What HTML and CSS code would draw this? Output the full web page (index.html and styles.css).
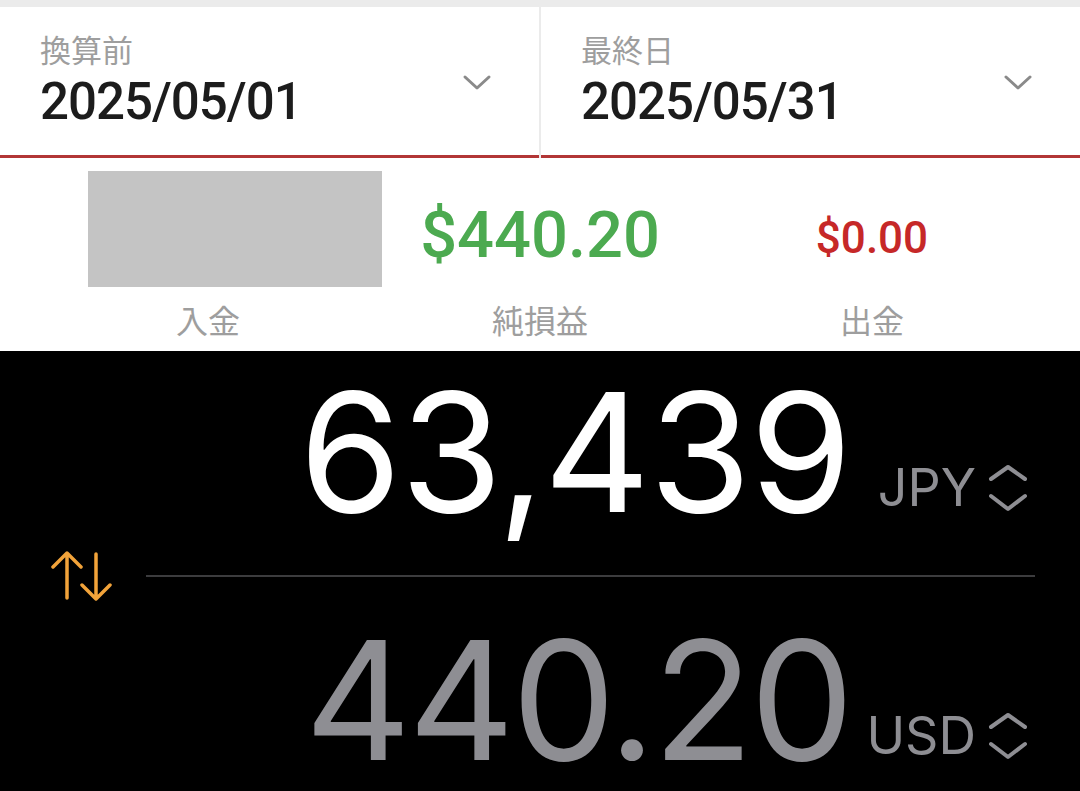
FILE: index.html
```html
<!DOCTYPE html>
<html lang="ja">
<head>
<meta charset="utf-8">
<title>換算</title>
<link rel="stylesheet" href="styles.css">
</head>
<body>
<div class="page">
  <header class="dates">
    <div class="date-card">
      <div class="date-text">
        <div class="date-label">換算前</div>
        <div class="date-value">2025/05/01</div>
      </div>
      <svg class="drop" width="30" height="18" viewBox="0 0 30 18"><path d="M3 3 L15 14 L27 3" fill="none" stroke="#8a8a8a" stroke-width="3" stroke-linecap="round" stroke-linejoin="round"/></svg>
    </div>
    <div class="date-card">
      <div class="date-text">
        <div class="date-label">最終日</div>
        <div class="date-value">2025/05/31</div>
      </div>
      <svg class="drop" width="30" height="18" viewBox="0 0 30 18"><path d="M3 3 L15 14 L27 3" fill="none" stroke="#8a8a8a" stroke-width="3" stroke-linecap="round" stroke-linejoin="round"/></svg>
    </div>
  </header>

  <section class="stats">
    <div class="stat">
      <div class="stat-value stat-redacted"><div class="redact"></div></div>
      <div class="stat-label">入金</div>
    </div>
    <div class="stat">
      <div class="stat-value"><span class="amount amount-profit">$440.20</span></div>
      <div class="stat-label">純損益</div>
    </div>
    <div class="stat">
      <div class="stat-value"><span class="amount amount-out">$0.00</span></div>
      <div class="stat-label">出金</div>
    </div>
  </section>

  <section class="converter">
    <div class="conv-row">
      <span class="big big-primary">63,439</span>
      <div class="unit">
        <span class="unit-code">JPY</span>
        <svg class="updown" width="40" height="48" viewBox="0 0 40 48"><path d="M3 15 L20 3 L37 15 M3 32 L20 45 L37 32" fill="none" stroke="#8e8e93" stroke-width="4" stroke-linecap="round" stroke-linejoin="round"/></svg>
      </div>
    </div>
    <div class="conv-mid">
      <svg class="swap" width="64" height="50" viewBox="0 0 64 50"><path d="M19 3 V47 M5 16 L19 2 L33 16 M48 3 V48 M34 34 L48 48 L62 34" fill="none" stroke="#f2a33a" stroke-width="3.5" stroke-linecap="round" stroke-linejoin="round"/></svg>
      <div class="rule"></div>
    </div>
    <div class="conv-row">
      <span class="big big-secondary">440.20</span>
      <div class="unit">
        <span class="unit-code">USD</span>
        <svg class="updown" width="40" height="48" viewBox="0 0 40 48"><path d="M3 15 L20 3 L37 15 M3 32 L20 45 L37 32" fill="none" stroke="#8e8e93" stroke-width="4" stroke-linecap="round" stroke-linejoin="round"/></svg>
      </div>
    </div>
  </section>
</div>
</body>
</html>
```
FILE: styles.css
```css
* { box-sizing: border-box; }
html, body { margin: 0; padding: 0; }
body {
  width: 1080px;
  height: 791px;
  overflow: hidden;
  background: #ffffff;
  font-family: Roboto, "Noto Sans CJK JP", sans-serif;
}
.page { width: 1080px; height: 791px; display: flex; flex-direction: column; }

/* ---- date header ---- */
.dates {
  background: #ebebeb;
  padding-top: 7px;
  display: grid;
  grid-template-columns: 539px 1fr;
  column-gap: 2px;
}
.date-card {
  background: #ffffff;
  height: 151px;
  border-bottom: 3px solid #b23636;
  padding-top: 24px;
  display: flex;
  align-items: flex-start;
}
.date-text { flex: 1; padding-left: 40px; }
.date-label {
  font-family: "Noto Sans CJK JP", sans-serif;
  font-size: 31px;
  line-height: 36px;
  color: #9e9e9e;
}
.date-value {
  margin-top: 9px;
  font-family: Roboto, sans-serif;
  font-weight: 500;
  font-size: 51px;
  line-height: 52px;
  letter-spacing: -1px;
  color: #1c1c1c;
}
.drop { margin-top: 43px; margin-right: 47px; flex: none; }

/* ---- stats ---- */
.stats {
  height: 193px;
  padding: 13px 42px 0 42px;
  display: grid;
  grid-template-columns: repeat(3, minmax(0, 1fr));
}
.stat { display: flex; flex-direction: column; align-items: center; min-width: 0; }
.stat-value {
  height: 116px;
  width: 100%;
  display: flex;
  align-items: center;
  justify-content: center;
}
.stat-redacted { justify-content: flex-start; padding-left: 46px; }
.redact { width: 294px; height: 116px; background: #c4c4c4; flex: none; }
.amount { font-family: Roboto, sans-serif; font-weight: 500; line-height: 1; white-space: nowrap; }
.amount-profit { font-size: 65px; color: #4caa50; padding-top: 12px; }
.amount-out { font-size: 44px; color: #c62828; padding-top: 18px; }
.stat-label {
  margin-top: 14px;
  font-family: "Noto Sans CJK JP", sans-serif;
  font-size: 32px;
  line-height: 36px;
  color: #9e9e9e;
}

/* ---- converter ---- */
.converter {
  flex: 1;
  background: #000000;
  padding-top: 18px;
  display: flex;
  flex-direction: column;
}
.conv-row {
  height: 165px;
  display: flex;
  justify-content: flex-end;
  align-items: flex-start;
  padding-right: 52px;
}
.big {
  font-family: Inter, "Liberation Sans", sans-serif;
  font-weight: 400;
  font-size: 165px;
  line-height: 174px;
  margin-top: -4px;
  margin-bottom: -5px;
}
.big-primary { color: #ffffff; letter-spacing: -1.2px; }
.big-secondary { color: #8e8e93; letter-spacing: -3.2px; }
.unit {
  align-self: flex-end;
  display: flex;
  align-items: center;
  margin-bottom: 20px;
}
.unit-code {
  width: 125px;
  text-align: right;
  font-family: Inter, "Liberation Sans", sans-serif;
  font-size: 52px;
  line-height: 52px;
  color: #8e8e93;
}
.updown { margin-left: 12px; flex: none; }
.conv-mid {
  height: 83px;
  display: flex;
  align-items: center;
  padding-left: 48px;
  padding-right: 45px;
}
.swap { flex: none; }
.rule { flex: 1; height: 2px; margin-left: 34px; background: #3c3c3e; }
```
